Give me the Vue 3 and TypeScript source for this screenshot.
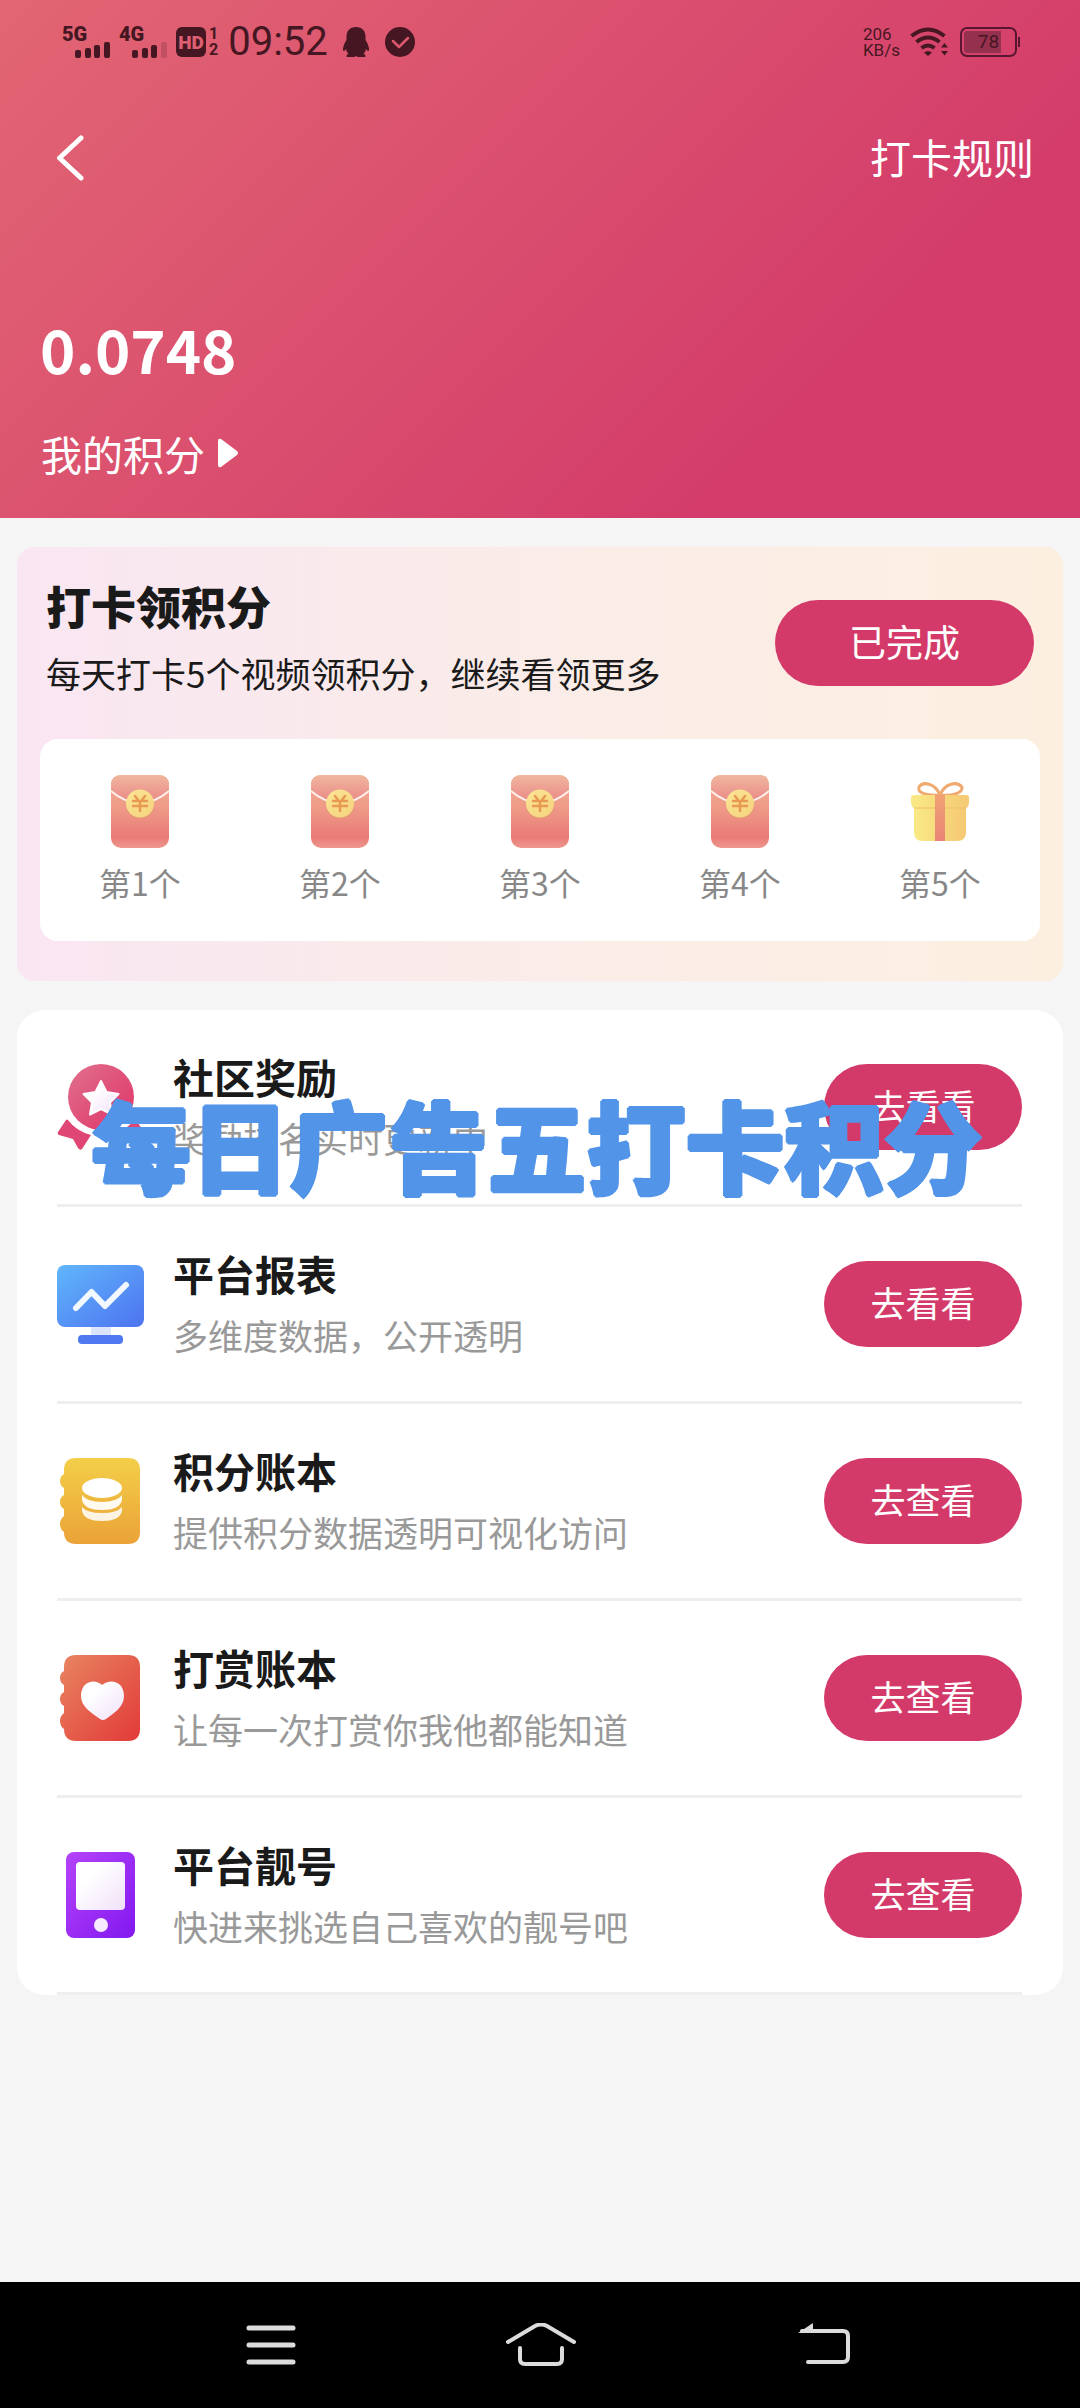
<script setup lang="ts">
interface Entry {
  id: string
  title: string
  desc: string
  action: string
}

const steps: number[] = [1, 2, 3, 4, 5]

const entries: Entry[] = [
  { id: 'medal', title: '社区奖励', desc: '奖励排名实时更新中', action: '去看看' },
  { id: 'report', title: '平台报表', desc: '多维度数据，公开透明', action: '去看看' },
  { id: 'points', title: '积分账本', desc: '提供积分数据透明可视化访问', action: '去查看' },
  { id: 'reward', title: '打赏账本', desc: '让每一次打赏你我他都能知道', action: '去查看' },
  { id: 'number', title: '平台靓号', desc: '快进来挑选自己喜欢的靓号吧', action: '去查看' },
]
</script>

<template>
  <div class="page">
    <header class="hero">
      <div class="status">
        <div class="signal">
          <span>5G</span>
          <svg width="36" height="16" viewBox="0 0 36 16" fill="currentColor">
            <rect x="0" y="8" width="6" height="8" rx="2" />
            <rect x="10" y="6" width="6" height="10" rx="2" />
            <rect x="19" y="3" width="6" height="13" rx="2" />
            <rect x="29" y="0" width="6" height="16" rx="2" />
          </svg>
        </div>
        <div class="signal">
          <span>4G</span>
          <svg width="36" height="16" viewBox="0 0 36 16" fill="currentColor">
            <rect x="0" y="8" width="6" height="8" rx="2" />
            <rect x="10" y="6" width="6" height="10" rx="2" />
            <rect x="19" y="3" width="6" height="13" rx="2" />
            <rect x="29" y="0" width="6" height="16" rx="2" opacity=".2" />
          </svg>
        </div>
        <div class="hd">
          <span class="hd-box">HD</span>
          <span class="hd-nums"><b>1</b><b>2</b></span>
        </div>
        <time class="clock">09:52</time>
        <svg class="penguin" width="26" height="30" viewBox="0 0 26 30" fill="currentColor">
          <path d="M13 0C7 0 3.500 4 3.500 9.500V13C1.500 16 0 19.500 0 22.500C.3 25 1.800 24 3 22C3.400 24 4.200 25.500 5.500 26.800C3.800 27.400 3.500 28.500 3.600 30H11.500L13 29L14.500 30H22.400C22.500 28.500 22.200 27.400 20.500 26.800C21.800 25.500 22.600 24 23 22C24.200 24 25.700 25 26 22.500C26 19.500 24.500 16 22.500 13V9.500C22.500 4 19 0 13 0Z" />
        </svg>
        <svg width="30" height="30" viewBox="0 0 30 30">
          <circle cx="15" cy="15" r="15" fill="currentColor" />
          <path d="M8 14L14 20L23 11" fill="none" stroke="#dc586f" stroke-width="2.500" stroke-linecap="round" stroke-linejoin="round" />
        </svg>
        <div class="speed"><span>206</span><span>KB/s</span></div>
        <svg class="wifi" width="39" height="30" viewBox="0 0 39 30" fill="none" stroke="currentColor" stroke-width="4">
          <path d="M1.500 9Q18 -4 34.500 9" />
          <path d="M6.500 15Q18 6 29.500 15" />
          <path d="M11.500 21Q18 16 24.500 21" />
          <path d="M14 25.500Q18 22.500 22 25.500L18 29Z" fill="currentColor" stroke="none" />
          <path d="M31 20.500H38L34.500 16ZM31 24H38L34.500 28.500Z" fill="currentColor" stroke="none" />
        </svg>
        <div class="battery"><span>78</span></div>
      </div>

      <nav class="titlebar">
        <button class="back" type="button" aria-label="返回">
          <svg width="28" height="46" viewBox="0 0 28 46" fill="none" stroke="#fff" stroke-width="5" stroke-linecap="round" stroke-linejoin="round">
            <path d="M25 3L3.500 23L25 43" />
          </svg>
        </button>
        <a class="rules" href="#rules">打卡规则</a>
      </nav>

      <div class="score">0.0748</div>
      <a class="mine" href="#points">
        我的积分
        <svg width="22" height="30" viewBox="0 0 22 30" fill="#fff">
          <path d="M1 3Q1 0 4 1L20 13Q22 15 20 17L4 29Q1 30 1 27Z" />
        </svg>
      </a>
    </header>

    <svg class="defs" width="0" height="0" aria-hidden="true">
      <defs>
        <linearGradient id="env" x1="0" y1="0" x2="0" y2="1">
          <stop offset="0" stop-color="#f2b096" /><stop offset=".45" stop-color="#ee9a87" />
          <stop offset=".85" stop-color="#ea7b77" /><stop offset="1" stop-color="#ee9790" />
        </linearGradient>
        <linearGradient id="flap" x1="0" y1="0" x2="0" y2="1">
          <stop offset="0" stop-color="#f0b79f" /><stop offset="1" stop-color="#e98585" />
        </linearGradient>
        <linearGradient id="coin" x1="0" y1="0" x2="1" y2="1">
          <stop offset="0" stop-color="#fbe695" /><stop offset="1" stop-color="#f4d27e" />
        </linearGradient>
        <linearGradient id="gift" x1="0" y1="0" x2="1" y2="0">
          <stop offset="0" stop-color="#f9ea86" /><stop offset="1" stop-color="#f5c873" />
        </linearGradient>
        <linearGradient id="ribbon" x1="0" y1="0" x2="0" y2="1">
          <stop offset="0" stop-color="#f0a273" /><stop offset="1" stop-color="#ea8478" />
        </linearGradient>
        <linearGradient id="medal" x1="0" y1="0" x2="1" y2="1">
          <stop offset="0" stop-color="#e0708e" /><stop offset=".8" stop-color="#e0406f" />
        </linearGradient>
        <linearGradient id="blue" x1="0" y1="0" x2="1" y2="1">
          <stop offset="0" stop-color="#60b6fb" /><stop offset="1" stop-color="#4d73f0" />
        </linearGradient>
        <linearGradient id="gold" x1="0" y1="0" x2="0" y2="1">
          <stop offset="0" stop-color="#f3cf48" /><stop offset="1" stop-color="#eba238" />
        </linearGradient>
        <linearGradient id="red" x1="0" y1="0" x2="1" y2="1">
          <stop offset="0" stop-color="#e88561" /><stop offset="1" stop-color="#e23a38" />
        </linearGradient>
        <linearGradient id="violet" x1="0" y1="0" x2="1" y2="1">
          <stop offset="0" stop-color="#b543f8" /><stop offset="1" stop-color="#8218f0" />
        </linearGradient>
        <linearGradient id="pale" x1="0" y1="0" x2="1" y2="1">
          <stop offset=".3" stop-color="#fff" /><stop offset="1" stop-color="#f0e0f8" />
        </linearGradient>
      </defs>
    </svg>

    <main class="content">
      <section class="checkin">
        <div class="checkin-head">
          <div>
            <h1>打卡领积分</h1>
            <p>每天打卡5个视频领积分，继续看领更多</p>
          </div>
          <button class="pill done" type="button">已完成</button>
        </div>
        <ol class="steps">
          <li v-for="n in steps" :key="n">
            <svg v-if="n < 5" width="58" height="73" viewBox="0 0 58 73">
              <rect width="58" height="73" rx="10" fill="url(#env)" />
              <path d="M0 16V10Q0 0 10 0H48Q58 0 58 10V16Q44 28 29 28Q14 28 0 16Z" fill="url(#flap)" />
              <path d="M0 16Q14 28 29 28Q44 28 58 16" fill="none" stroke="#fff3ee" stroke-width="2" />
              <circle cx="29" cy="30" r="14" fill="#e29a6c" opacity=".6" />
              <circle cx="29" cy="28.500" r="14" fill="url(#coin)" />
              <path d="M24 21L27 25M34 21L31 25M22 26H36M22 31H36M29 26V36" fill="none" stroke="#e89a52" stroke-width="2.500" stroke-linecap="round" />
            </svg>
            <svg v-else width="58" height="73" viewBox="0 0 58 73">
              <path d="M29 20C24 8 12 6 8 12C6 18 16 21 29 20C42 21 52 18 51 12C46 6 34 8 29 20Z" fill="none" stroke="#f0a96f" stroke-width="3" />
              <path d="M3 32H55V57Q55 66 46 66H12Q3 66 3 57Z" fill="url(#gift)" />
              <path d="M0 23Q0 20 3 20H55Q58 20 58 23V27Q58 34 52 34H6Q0 34 0 27Z" fill="url(#gift)" />
              <path d="M3 33H55" stroke="#f1bd6b" stroke-width="1" />
              <rect x="24" y="20" width="10" height="46" fill="url(#ribbon)" />
            </svg>
            <span>第{{ n }}个</span>
          </li>
        </ol>
      </section>

      <section class="list">
        <article v-for="item in entries" :key="item.id" class="row">
          <svg class="icon" width="88" height="86" viewBox="0 0 88 86">
            <g v-if="item.id === 'medal'">
              <circle cx="44" cy="33" r="33" fill="url(#medal)" />
              <path d="M11 56Q19 67 34 71L25 85Q23 87 21 84L16 75L2 71Q0 70 1 68L9 56Q10 55 11 56Z" fill="#df4674" />
              <path d="M77 56Q69 67 54 71L63 85Q65 87 67 84L72 75L86 71Q88 70 87 68L79 56Q78 55 77 56Z" fill="#df4674" />
              <path d="M44 17L49.500 28L61.500 30L53 38.500L55 50.500L44 45L33 50.500L35 38.500L26.500 30L38.500 28Z" fill="url(#pale)" stroke="#fff" stroke-width="2" stroke-linejoin="round" />
            </g>
            <g v-else-if="item.id === 'report'">
              <rect y="4" width="87" height="62" rx="8" fill="url(#blue)" />
              <rect x="34" y="66" width="20" height="8" fill="#dbe4fc" />
              <rect x="21" y="74" width="45" height="9" rx="4" fill="#4f78f1" />
              <path d="M19 47L34.500 31L48 45L69 24" fill="none" stroke="#f2f8ff" stroke-width="6" stroke-linecap="round" stroke-linejoin="round" />
            </g>
            <g v-else-if="item.id === 'points'">
              <path d="M19 0H71Q83 0 83 12V74Q83 86 71 86H19Q7 86 7 74Q3 71 3 66Q3 61 7 58V51Q3 49 3 44Q3 39 7 37V30Q3 28 3 23Q3 18 7 16V12Q7 0 19 0Z" fill="url(#gold)" />
              <ellipse cx="45" cy="30" rx="20" ry="10" fill="#fff" />
              <path d="M25 37Q30 44 45 44Q60 44 65 37V42Q63 52 45 52Q27 52 25 42Z" fill="#fffaf0" />
              <path d="M25 49Q30 55 45 55Q60 55 65 49V53Q63 63 45 63Q27 63 25 53Z" fill="#fdf3e2" />
            </g>
            <g v-else-if="item.id === 'reward'">
              <path d="M19 0H71Q83 0 83 12V74Q83 86 71 86H19Q7 86 7 74Q3 71 3 66Q3 61 7 58V51Q3 49 3 44Q3 39 7 37V30Q3 28 3 23Q3 18 7 16V12Q7 0 19 0Z" fill="url(#red)" />
              <path d="M45 30C38 23 24 26 24 41C24 52 35 58 43 64Q46 66 49 64C57 58 67 52 67 41C67 26 53 23 45 30Z" fill="url(#pale)" />
            </g>
            <g v-else>
              <rect x="9" width="69" height="86" rx="8" fill="url(#violet)" />
              <rect x="19" y="10" width="49" height="48" rx="4" fill="url(#pale)" />
              <circle cx="44" cy="73" r="7" fill="#f6ecfe" />
            </g>
          </svg>
          <div class="text">
            <h2>{{ item.title }}</h2>
            <p>{{ item.desc }}</p>
          </div>
          <button class="pill" type="button">{{ item.action }}</button>
        </article>
        <div class="caption">每日广告五打卡积分</div>
      </section>
    </main>

    <footer class="sysnav">
      <button type="button" aria-label="菜单">
        <svg width="50" height="44" viewBox="0 0 50 44" fill="none" stroke="#dcdcdc" stroke-width="5" stroke-linecap="round">
          <path d="M3 5H47M3 22H47M3 39H47" />
        </svg>
      </button>
      <button type="button" aria-label="主页">
        <svg width="70" height="44" viewBox="0 0 70 44" fill="none" stroke="#dcdcdc" stroke-width="4" stroke-linecap="round">
          <path d="M2 19L29 3Q35 0 41 3L68 19" />
          <path d="M14 25V36Q14 41 19 41H51Q56 41 56 36V25" />
        </svg>
      </button>
      <button type="button" aria-label="返回上一级">
        <svg width="64" height="44" viewBox="0 0 64 44" fill="none" stroke="#dcdcdc" stroke-width="4" stroke-linecap="round">
          <path d="M16 8H57Q62 8 62 13V34Q62 39 57 39H22" />
          <path d="M12 10L27 0V10Z" fill="#dcdcdc" stroke="none" />
        </svg>
      </button>
    </footer>
  </div>
</template>

<style>
body {
  margin: 0;
  background: #f5f5f5;
}
</style>

<style scoped>
.page {
  display: flex;
  flex-direction: column;
  min-height: 100vh;
  background: #f5f5f5;
  color: #1a1a1a;
  font-family: "Noto Sans CJK SC", sans-serif;
}

h1,
h2,
p,
ol {
  margin: 0;
  padding: 0;
}

button {
  border: 0;
  padding: 0;
  background: none;
  font-family: inherit;
}

a {
  color: inherit;
  text-decoration: none;
}

svg {
  display: block;
  flex: none;
}

.defs {
  position: absolute;
}

.hero {
  color: #fff;
  background: linear-gradient(135deg, #e26673, #d33b6a 78%);
  padding-bottom: 35px;
}

.status {
  display: flex;
  align-items: center;
  height: 84px;
  padding: 0 63px 0 62px;
  color: #451722;
  font-family: Roboto, sans-serif;
}

.signal {
  display: flex;
  flex-direction: column;
  width: 49px;
  margin-right: 8px;
  font-size: 20px;
  font-weight: 900;
  line-height: 16px;
}

.signal svg {
  align-self: flex-end;
}

.hd {
  display: flex;
  gap: 3px;
  height: 30px;
}

.hd-box {
  width: 30px;
  border-radius: 6px;
  background: #451722;
  color: #de5f72;
  font-size: 19px;
  font-weight: 900;
  line-height: 31px;
  text-align: center;
}

.hd-nums {
  display: flex;
  flex-direction: column;
  justify-content: space-between;
  font-size: 16px;
  line-height: 14px;
}

.clock {
  margin-left: 10px;
  margin-right: 15px;
  font-size: 40px;
  line-height: 40px;
}

.penguin {
  margin-right: 16px;
}

.speed {
  display: flex;
  flex-direction: column;
  margin-left: auto;
  margin-right: 10px;
  font-size: 17px;
  line-height: 16px;
}

.wifi {
  margin-right: 11px;
}

.battery {
  position: relative;
  box-sizing: border-box;
  width: 57px;
  height: 30px;
  border: 2px solid #5a1630;
  border-radius: 7px;
  padding: 2px;
  font-size: 19px;
  line-height: 22px;
  text-align: center;
  background: linear-gradient(90deg, #96304f 75%, transparent 75%) content-box;
}

.battery::after {
  content: "";
  position: absolute;
  top: 8px;
  right: -5px;
  width: 2px;
  height: 10px;
  background: #5a1630;
}

.titlebar {
  display: flex;
  align-items: center;
  justify-content: space-between;
  height: 148px;
  padding: 0 46px 0 56px;
}

.rules,
.mine {
  font-size: 41px;
  line-height: 60px;
}

.rules {
  padding-bottom: 4px;
}

.score {
  margin: 76px 40px 35px;
  font-size: 60px;
  font-weight: 700;
  line-height: 80px;
}

.mine {
  display: flex;
  align-items: center;
  gap: 12px;
  width: fit-content;
  margin-left: 41px;
}

.content {
  display: flex;
  flex-direction: column;
  gap: 29px;
  padding: 29px 17px;
}

.checkin {
  padding: 0 23px 40px;
  border-radius: 18px;
  background: linear-gradient(90deg, #f9e6f2, #faece8 50%, #fcefe0);
}

.checkin-head {
  display: flex;
  align-items: center;
  justify-content: space-between;
  height: 192px;
  padding: 0 6px;
}

h1 {
  font-size: 45px;
  font-weight: 900;
  line-height: 60px;
}

.checkin-head p {
  font-size: 35px;
  line-height: 74px;
}

.pill {
  flex: none;
  width: 198px;
  height: 86px;
  padding-bottom: 4px;
  border-radius: 43px;
  background: #d43a69;
  color: #fff;
  font-size: 35px;
  line-height: 82px;
}

.done {
  width: 259px;
  font-size: 37px;
}

.steps {
  display: flex;
  padding: 36px 0 39px;
  border-radius: 18px;
  background: #fff;
  list-style: none;
}

.steps li {
  display: flex;
  flex: 1;
  flex-direction: column;
  align-items: center;
  gap: 14px;
  color: #888;
  font-size: 32px;
  line-height: 40px;
}

.list {
  position: relative;
  padding: 0 41px 0 40px;
  border-radius: 28px;
  background: #fff;
}

.row {
  display: flex;
  align-items: center;
  height: 194px;
  border-bottom: 3px solid #eee;
}

.text {
  flex: 1;
  margin-left: 28px;
}

h2 {
  font-size: 41px;
  font-weight: 700;
  line-height: 62px;
}

.text p {
  color: #999;
  font-size: 35px;
  line-height: 62px;
}

.caption {
  position: absolute;
  top: 78px;
  left: 0;
  right: 6px;
  color: #5294e8;
  font-size: 99px;
  font-weight: 900;
  line-height: 110px;
  text-align: center;
  white-space: nowrap;
  text-shadow: 2px 0 #5294e8, -2px 0 #5294e8, 0 2px #5294e8, 0 -2px #5294e8,
    1px 1px #5294e8, -1px 1px #5294e8, 1px -1px #5294e8, -1px -1px #5294e8;
  pointer-events: none;
}

.sysnav {
  display: flex;
  align-items: center;
  justify-content: space-between;
  height: 126px;
  margin-top: auto;
  padding: 0 230px 0 246px;
  background: #000;
}
</style>
